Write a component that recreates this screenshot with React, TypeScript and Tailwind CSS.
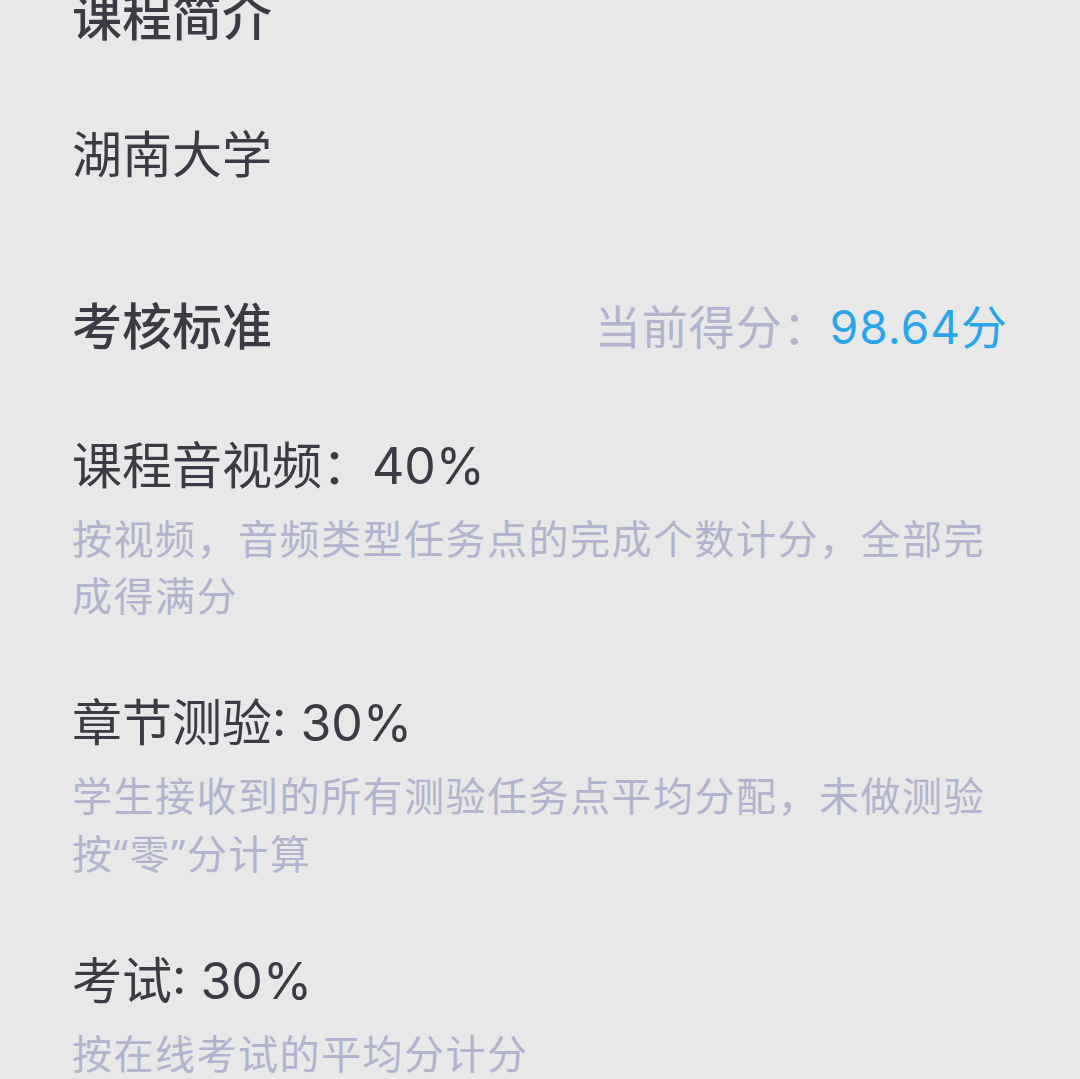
const font = "font-['Inter','Noto_Sans_CJK_SC','Noto_Sans',sans-serif]"

type Rule = {
  title: string
  desc: React.ReactNode
}

const q = "font-['Noto_Sans',sans-serif]"

const rules: Rule[] = [
  { title: "课程音视频：40%", desc: "按视频，音频类型任务点的完成个数计分，全部完成得满分" },
  {
    title: "章节测验: 30%",
    desc: (
      <>
        学生接收到的所有测验任务点平均分配，未做测验按<span className={q}>“</span>零<span className={q}>”</span>分计算
      </>
    ),
  },
  { title: "考试: 30%", desc: "按在线考试的平均分计分" },
]

function RuleItem({ rule }: { rule: Rule }) {
  return (
    <div className="mt-[63px]">
      <div className="text-[50px] leading-[70px] text-[#3a3b45]">{rule.title}</div>
      <div className="mt-[10px] text-[40px] leading-[57px] tracking-[1.5px] text-[#b2b3cf]">
        {rule.desc}
      </div>
    </div>
  )
}

export default function App() {
  return (
    <div className={`min-h-[1079px] w-full bg-[#e8e8e8] overflow-hidden ${font}`}>
      <div className="px-[72px] pb-[80px]">
        <div className="-mt-[17px] text-[50px] leading-[70px] font-medium text-[#3a3b45]">课程简介</div>
        <div className="mt-[67px] text-[50px] leading-[70px] text-[#3a3b45]">湖南大学</div>

        <div className="mt-[102px] flex items-center justify-between">
          <div className="text-[50px] leading-[70px] font-medium text-[#3a3b45]">考核标准</div>
          <div className="text-[46px] leading-[70px] tracking-[1px]">
            <span className="text-[#b2b3cf]">当前得分：</span>
            <span className="text-[#2aa5ea]">98.64分</span>
          </div>
        </div>

        <div className="-mt-[63px] pt-[69px]">
          {rules.map((r) => (
            <RuleItem key={r.title} rule={r} />
          ))}
        </div>
      </div>
    </div>
  )
}
